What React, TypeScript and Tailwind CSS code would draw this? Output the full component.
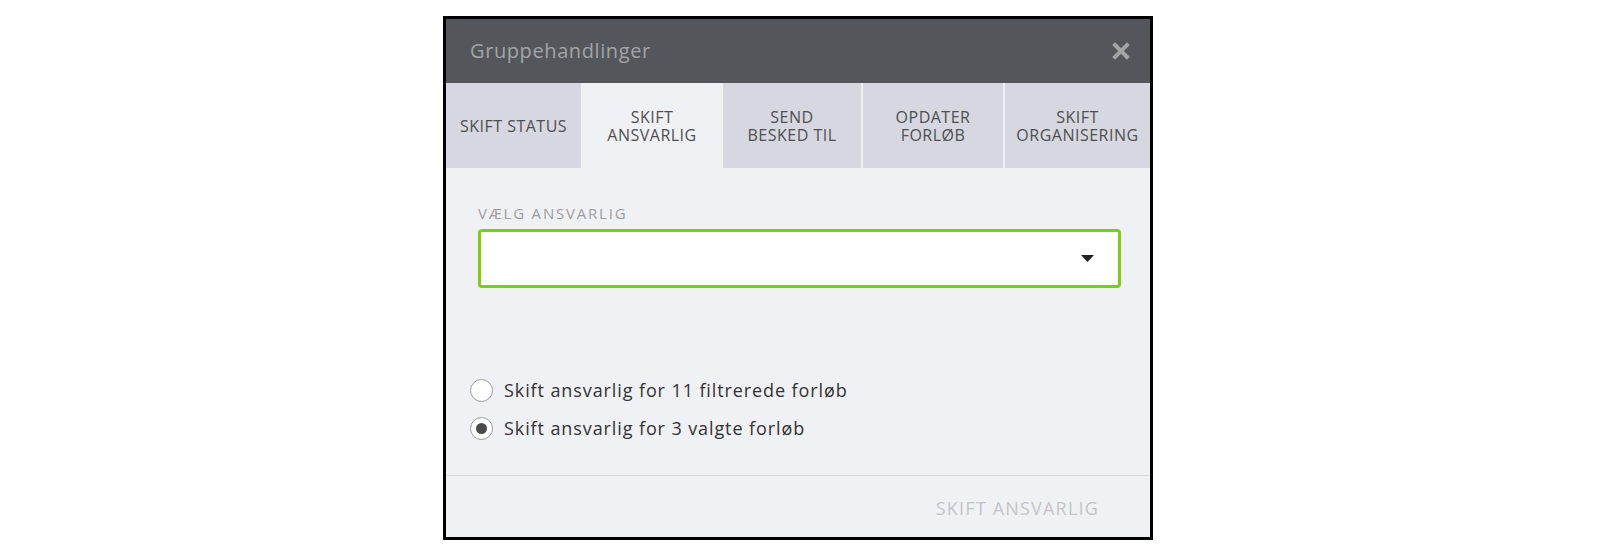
import { useState } from 'react'

const tabs = [
  { label: 'SKIFT STATUS', w: 'w-[135px]' },
  { label: 'SKIFT\nANSVARLIG', w: 'w-[138px]' },
  { label: 'SEND\nBESKED TIL', w: 'w-[138px]' },
  { label: 'OPDATER\nFORLØB', w: 'w-[140px]' },
  { label: 'SKIFT\nORGANISERING', w: 'flex-1' }
]

const Radio = ({ checked, label, onClick }: { checked: boolean; label: string; onClick: () => void }) => (
  <button onClick={onClick} className="flex items-center h-[30px] text-left">
    <span className="flex items-center justify-center w-[23px] h-[23px] rounded-full border-[1.5px] border-[#9a9a9a] bg-white">
      {checked ? <span className="block w-[11px] h-[11px] rounded-full bg-[#4a4a4a]" /> : null}
    </span>
    <span className="ml-[11px] text-[18px] tracking-[0.9px] text-[#333]">{label}</span>
  </button>
)

export default function App() {
  const [active, setActive] = useState(1)
  const [scope, setScope] = useState(1)

  return (
    <div className="w-full h-[556px] bg-white pt-[16px]" style={{ fontFamily: '"Open Sans", "Noto Sans", sans-serif' }}>
      <div className="ml-[443px] w-[710px] border-[3px] border-black bg-[#f0f1f5]">
        <div className="flex items-center justify-between h-[64px] bg-[#53565b] pl-[24px] pr-[20px]">
          <span className="text-[20px] tracking-[0.6px] text-[#a3a4a6]">Gruppehandlinger</span>
          <svg width="18" height="18" viewBox="0 0 18 18">
            <path d="M3 3 L15 15 M15 3 L3 15" stroke="#a3a4a6" strokeWidth="4" strokeLinecap="square" />
          </svg>
        </div>

        <div className="flex h-[85px] gap-[2px] bg-[#eef0f4]">
          {tabs.map((t, i) => (
            <button
              key={t.label}
              onClick={() => setActive(i)}
              className={`${t.w} flex items-center justify-center whitespace-pre-line text-center text-[16px] leading-[18px] font-medium tracking-[0.5px] text-[#4f4f4f] ${
                i === active ? 'bg-[#f0f1f5]' : 'bg-[#d6d7e0]'
              }`}>
              {t.label}
            </button>
          ))}
        </div>

        <div className="h-[308px] border-b border-[#d6d6d6]">
          <div className="pl-[32px] pr-[29px] pt-[37px]">
            <p className="text-[15px] leading-[16px] tracking-[1.8px] text-[#9d9d9d]">VÆLG ANSVARLIG</p>
            <div className="mt-[8px] flex items-center justify-end h-[59px] rounded-[4px] border-[3px] border-[#7fcc12] bg-white pr-[24px]">
              <svg width="13" height="7" viewBox="0 0 13 7">
                <path d="M0 0 H13 L6.5 7 Z" fill="#222" />
              </svg>
            </div>
          </div>
          <div className="flex flex-col gap-[8px] pl-[24px] mt-[87px]">
            <Radio checked={scope === 0} onClick={() => setScope(0)} label="Skift ansvarlig for 11 filtrerede forløb" />
            <Radio checked={scope === 1} onClick={() => setScope(1)} label="Skift ansvarlig for 3 valgte forløb" />
          </div>
        </div>

        <div className="flex items-center justify-end h-[61px] pr-[51px]">
          <span className="text-[18px] text-[#c4c4c6] tracking-[1.2px] mt-[3px]">SKIFT ANSVARLIG</span>
        </div>
      </div>
    </div>
  )
}
